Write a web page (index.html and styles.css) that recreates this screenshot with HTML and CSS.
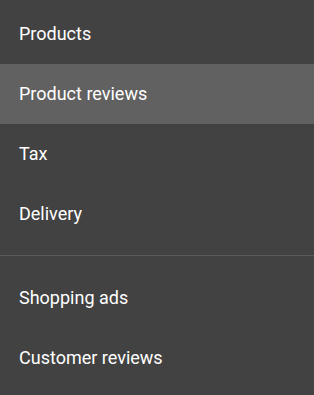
FILE: index.html
```html
<!DOCTYPE html>
<html>
<head>
<meta charset="utf-8">
<link rel="stylesheet" href="styles.css">
</head>
<body>
<nav class="menu">
  <ul class="group">
    <li class="item">Products</li>
    <li class="item active">Product reviews</li>
    <li class="item">Tax</li>
    <li class="item">Delivery</li>
  </ul>
  <hr class="divider">
  <ul class="group">
    <li class="item">Shopping ads</li>
    <li class="item">Customer reviews</li>
  </ul>
</nav>
</body>
</html>
```
FILE: styles.css
```css
html, body {
  margin: 0;
  padding: 0;
  background: #424242;
}
.menu {
  width: 314px;
  height: 395px;
  background: #424242;
  padding-top: 4px;
  box-sizing: border-box;
  font-family: Roboto, "Noto Sans", sans-serif;
}
.group {
  list-style: none;
  margin: 0;
  padding: 0;
}
.item {
  box-sizing: border-box;
  height: 60px;
  display: flex;
  align-items: center;
  padding: 0 0 2px 19px;
  color: #ffffff;
  font-size: 18px;
}
.item.active {
  background: #616161;
}
.divider {
  border: 0;
  height: 1px;
  background: #5a5a5a;
  margin: 11px 0 12px;
}
```
